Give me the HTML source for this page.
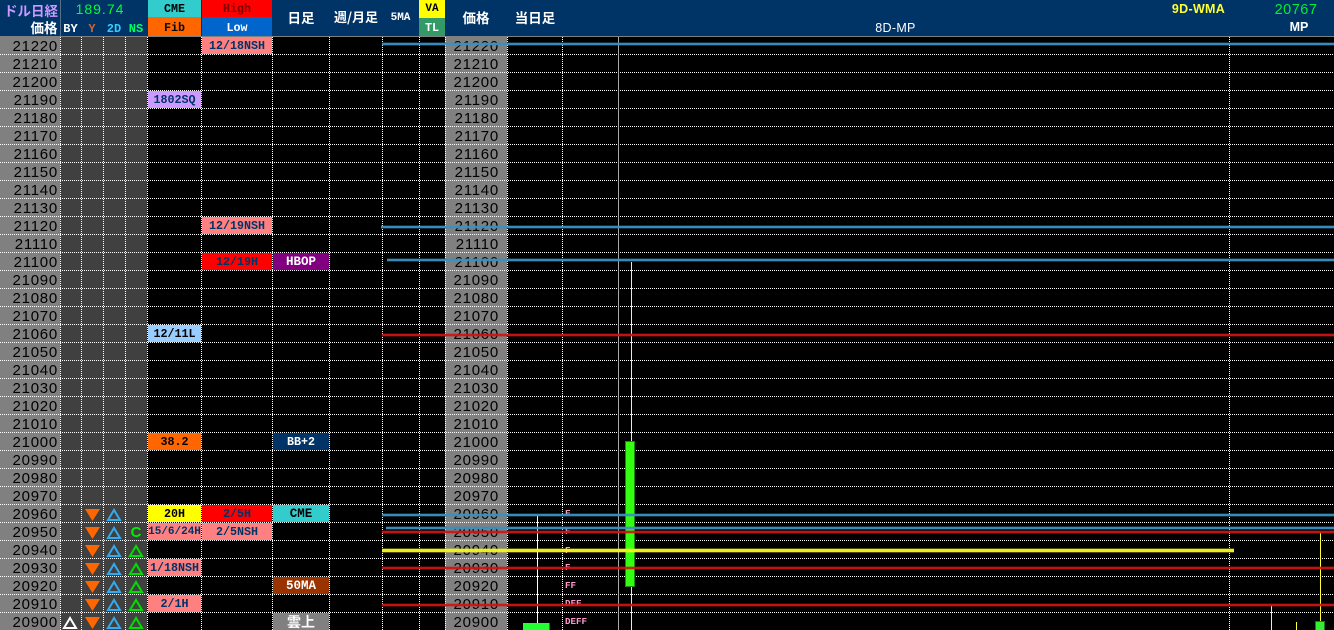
<!DOCTYPE html>
<html><head><meta charset="utf-8"><style>
html,body{margin:0;padding:0;background:#000}
#r{position:relative;width:1334px;height:630px;background:#000;overflow:hidden;font-family:"Liberation Mono","Noto Sans CJK JP",monospace;font-weight:bold}
#r div{position:absolute}
.h{white-space:nowrap;line-height:16px;text-align:center}
.p{font:15px/18px "Liberation Sans",sans-serif;letter-spacing:.75px;color:#000;text-align:right;white-space:pre}
.l{height:17px;line-height:19px;font-size:11.7px;text-align:center;color:#003366;white-space:nowrap;overflow:hidden}
.b{font-size:12.5px}
.k{background:#ff8080}
.j{font-family:"Noto Sans CJK JP",sans-serif;font-size:13.5px;color:#fff}
.f{left:565px;font-size:9.2px;line-height:10px;color:#ff99cc;white-space:nowrap}
</style></head><body><div id="r">
<div style="left:0;top:0;width:1334px;height:36px;background:#003366"></div>
<div style="left:0;top:36px;width:1334px;height:1px;background:#808080"></div>
<div style="left:60px;top:0;width:1px;height:36px;background:#55708c"></div>
<div style="left:0;top:37px;width:60px;height:593px;background:#808080"></div>
<div style="left:60px;top:37px;width:87px;height:593px;background:#404040"></div>
<div style="left:445px;top:37px;width:62px;height:593px;background:#808080"></div>
<div style="left:148px;top:0;width:53px;height:17px;background:#33cccc"></div>
<div style="left:148px;top:17px;width:53px;height:19px;background:#ff6600"></div>
<div style="left:202px;top:0;width:70px;height:17px;background:#ff0000"></div>
<div style="left:202px;top:17px;width:70px;height:19px;background:#0066cc"></div>
<div style="left:419px;top:0;width:26px;height:18px;background:#ffff00"></div>
<div style="left:419px;top:18px;width:26px;height:18px;background:#339966"></div>
<div class="h" style="left:3px;top:2px;width:56px;font-size:13.5px;color:#cc99ff;font-family:'Noto Sans CJK JP',sans-serif">ドル日経</div>
<div class="h" style="left:30px;top:19px;width:28px;font-size:13.5px;color:#fff;font-family:'Noto Sans CJK JP',sans-serif">価格</div>
<div class="h" style="left:70px;top:1px;width:60px;font:14px/16px 'Liberation Sans',sans-serif;letter-spacing:1px;color:#00ff33">189.74</div>
<div class="h" style="left:60px;top:21px;width:21px;font-size:12px;color:#fff">BY</div>
<div class="h" style="left:81px;top:21px;width:22px;font-size:12px;color:#cc6633">Y</div>
<div class="h" style="left:103px;top:21px;width:22px;font-size:12px;color:#33ccff">2D</div>
<div class="h" style="left:125px;top:21px;width:22px;font-size:12px;color:#00ff66">NS</div>
<div class="h" style="left:148px;top:1px;width:53px;font-size:11.7px;color:#000">CME</div>
<div class="h" style="left:148px;top:20px;width:53px;font-size:11.7px;color:#000">Fib</div>
<div class="h" style="left:202px;top:1px;width:70px;font-size:11.7px;color:#800000">High</div>
<div class="h" style="left:202px;top:20px;width:70px;font-size:11.7px;color:#fff">Low</div>
<div class="h j" style="left:273px;top:9px;width:56px">日足</div>
<div class="h j" style="left:330px;top:9px;width:52px;font-size:13px">週/月足</div>
<div class="h" style="left:382px;top:10px;width:37px;font-size:11px;color:#fff">5MA</div>
<div class="h" style="left:419px;top:1px;width:26px;font-size:11px;color:#000">VA</div>
<div class="h" style="left:419px;top:20px;width:26px;font-size:11.7px;color:#fff">TL</div>
<div class="h j" style="left:445px;top:9px;width:62px">価格</div>
<div class="h j" style="left:507px;top:9px;width:56px">当日足</div>
<div class="h" style="left:872px;top:20px;width:47px;font-size:12.5px;font-weight:normal;color:#fff;font-family:'Liberation Sans',sans-serif;letter-spacing:.3px">8D-MP</div>
<div class="h" style="left:1165px;top:1px;width:67px;font-size:12.5px;color:#ffff33;font-family:'Liberation Sans',sans-serif;letter-spacing:.3px">9D-WMA</div>
<div class="h" style="left:1268px;top:2px;width:56px;font:14.5px/16px 'Liberation Sans',sans-serif;letter-spacing:.5px;color:#00ee33">20767</div>
<div class="h" style="left:1284px;top:19px;width:30px;font-size:12.5px;color:#fff;font-family:'Liberation Sans',sans-serif">MP</div>

<div class="p" style="left:0;top:38px;width:58px">21220
21210
21200
21190
21180
21170
21160
21150
21140
21130
21120
21110
21100
21090
21080
21070
21060
21050
21040
21030
21020
21010
21000
20990
20980
20970
20960
20950
20940
20930
20920
20910
20900</div>
<div class="p" style="left:445px;top:38px;width:54px">21220
21210
21200
21190
21180
21170
21160
21150
21140
21130
21120
21110
21100
21090
21080
21070
21060
21050
21040
21030
21020
21010
21000
20990
20980
20970
20960
20950
20940
20930
20920
20910
20900</div>

<svg width="1334" height="630" style="position:absolute;left:0;top:0">
<path d="M0 54.5H1334M0 72.5H1334M0 90.5H1334M0 108.5H1334M0 126.5H1334M0 144.5H1334M0 162.5H1334M0 180.5H1334M0 198.5H1334M0 216.5H1334M0 234.5H1334M0 252.5H1334M0 270.5H1334M0 288.5H1334M0 306.5H1334M0 324.5H1334M0 342.5H1334M0 360.5H1334M0 378.5H1334M0 396.5H1334M0 414.5H1334M0 432.5H1334M0 450.5H1334M0 468.5H1334M0 486.5H1334M0 504.5H1334M0 522.5H1334M0 540.5H1334M0 558.5H1334M0 576.5H1334M0 594.5H1334M0 612.5H1334" stroke="#fff" stroke-width="1" stroke-dasharray="1 1" fill="none"/>
<path d="M60.5 37V630M81.5 37V630M103.5 37V630M125.5 37V630M147.5 37V630M201.5 37V630M272.5 37V630M329.5 37V630M382.5 37V630M419.5 37V630M445.5 37V630M507.5 37V630M562.5 37V630M1229.5 37V630" stroke="#fff" stroke-width="1" stroke-dasharray="1 1" fill="none"/>
<path d="M618.5 37V630" stroke="#a8a8a8" stroke-width="1" fill="none"/>
</svg>

<div class="l k" style="left:202px;top:37px;width:70px">12/18NSH</div>
<div class="l" style="left:148px;top:91px;width:53px;background:#cc99ff">1802SQ</div>
<div class="l k" style="left:202px;top:217px;width:70px">12/19NSH</div>
<div class="l" style="left:202px;top:253px;width:70px;background:#ff0000">12/19H</div>
<div class="l b" style="left:273px;top:253px;width:56px;background:#800080;color:#fff">HBOP</div>
<div class="l" style="left:148px;top:325px;width:53px;background:#99ccff;color:#000">12/11L</div>
<div class="l" style="left:148px;top:433px;width:53px;background:#ff6600;color:#000">38.2</div>
<div class="l" style="left:273px;top:433px;width:56px;background:#003366;color:#fff">BB+2</div>
<div class="l" style="left:148px;top:505px;width:53px;background:#ffff00;color:#000">20H</div>
<div class="l" style="left:202px;top:505px;width:70px;background:#ff0000">2/5H</div>
<div class="l b" style="left:273px;top:505px;width:56px;background:#33cccc;color:#000">CME</div>
<div class="l k" style="left:148px;top:523px;width:53px;font-size:11px">15/6/24H</div>
<div class="l k" style="left:202px;top:523px;width:70px">2/5NSH</div>
<div class="l k" style="left:148px;top:559px;width:53px">1/18NSH</div>
<div class="l b" style="left:273px;top:577px;width:56px;background:#993300;color:#fff">50MA</div>
<div class="l k" style="left:148px;top:595px;width:53px">2/1H</div>
<div class="l j" style="left:273px;top:613px;width:56px;background:#808080;line-height:18px;font-size:14px">雲上</div>
<div class="l" style="left:125px;top:523px;width:22px;font-size:15px;color:#00ee00;font-family:'Liberation Sans',sans-serif;font-weight:bold">C</div>

<svg width="1334" height="630" style="position:absolute;left:0;top:0">
<g fill="#ff6600"><path d="M85 509H100L92.500 521Z"/><path d="M85 527H100L92.500 539Z"/><path d="M85 545H100L92.500 557Z"/><path d="M85 563H100L92.500 575Z"/><path d="M85 581H100L92.500 593Z"/><path d="M85 599H100L92.500 611Z"/><path d="M85 617H100L92.500 629Z"/></g>
<g fill="none" stroke="#33aaee" stroke-width="2"><path d="M114 510L108 520H120Z"/><path d="M114 528L108 538H120Z"/><path d="M114 546L108 556H120Z"/><path d="M114 564L108 574H120Z"/><path d="M114 582L108 592H120Z"/><path d="M114 600L108 610H120Z"/><path d="M114 618L108 628H120Z"/></g>
<g fill="none" stroke="#00dd00" stroke-width="2"><path d="M136 546L130 556H142Z"/><path d="M136 564L130 574H142Z"/><path d="M136 582L130 592H142Z"/><path d="M136 600L130 610H142Z"/><path d="M136 618L130 628H142Z"/></g>
<path d="M70 618L64 628H76Z" fill="none" stroke="#fff" stroke-width="2"/>
</svg>

<div class="f" style="top:509px">F</div>
<div class="f" style="top:527px">F</div>
<div class="f" style="top:546px">F</div>
<div class="f" style="top:563px">F</div>
<div class="f" style="top:581px">FF</div>
<div class="f" style="top:599px">DFF</div>
<div class="f" style="top:617px">DEFF</div>

<svg width="1334" height="630" style="position:absolute;left:0;top:0" shape-rendering="crispEdges">
<path d="M631.500 262V442M631.500 586V630M1271.500 605V630M1296.500 622V630M1320.500 532V622" stroke="#ffff33" stroke-width="1" fill="none"/>
<path d="M537.500 515V623" stroke="#fff" stroke-width="1"/>
<rect x="625.500" y="441.500" width="9" height="145" fill="#33ff11" stroke="#1a8a0a" stroke-width="1"/>
<rect x="523" y="623" width="26" height="7" fill="#22ff33"/>
<rect x="549" y="623" width="1" height="7" fill="#118811"/>
<rect x="1315.500" y="621.500" width="9" height="9" fill="#33ee33" stroke="#1a7a1a" stroke-width="1"/>
<g fill="none" stroke-width="4" opacity=".3">
<path d="M382 44H1334M381 227H1334M387 260H1334M382 515H1334M386 528H1334" stroke="#3a90c0"/>
<path d="M382 335H1334M382 532H1334M382 568H1334M382 605H1334" stroke="#d01414"/>
<path d="M382 550.500H1234" stroke="#f5f51e" stroke-width="5"/>
</g>
<g fill="none" stroke-width="2">
<path d="M382 44H1334M381 227H1334M387 260H1334M382 515H1334M386 528H1334" stroke="#3a90c0" opacity=".95"/>
<path d="M382 335H1334M382 532H1334M382 568H1334M382 605H1334" stroke="#d01414" opacity=".9"/>
<path d="M382 550.500H1234" stroke="#f5f51e" stroke-width="3" opacity=".95"/>
</g>
</svg>
</div></body></html>
